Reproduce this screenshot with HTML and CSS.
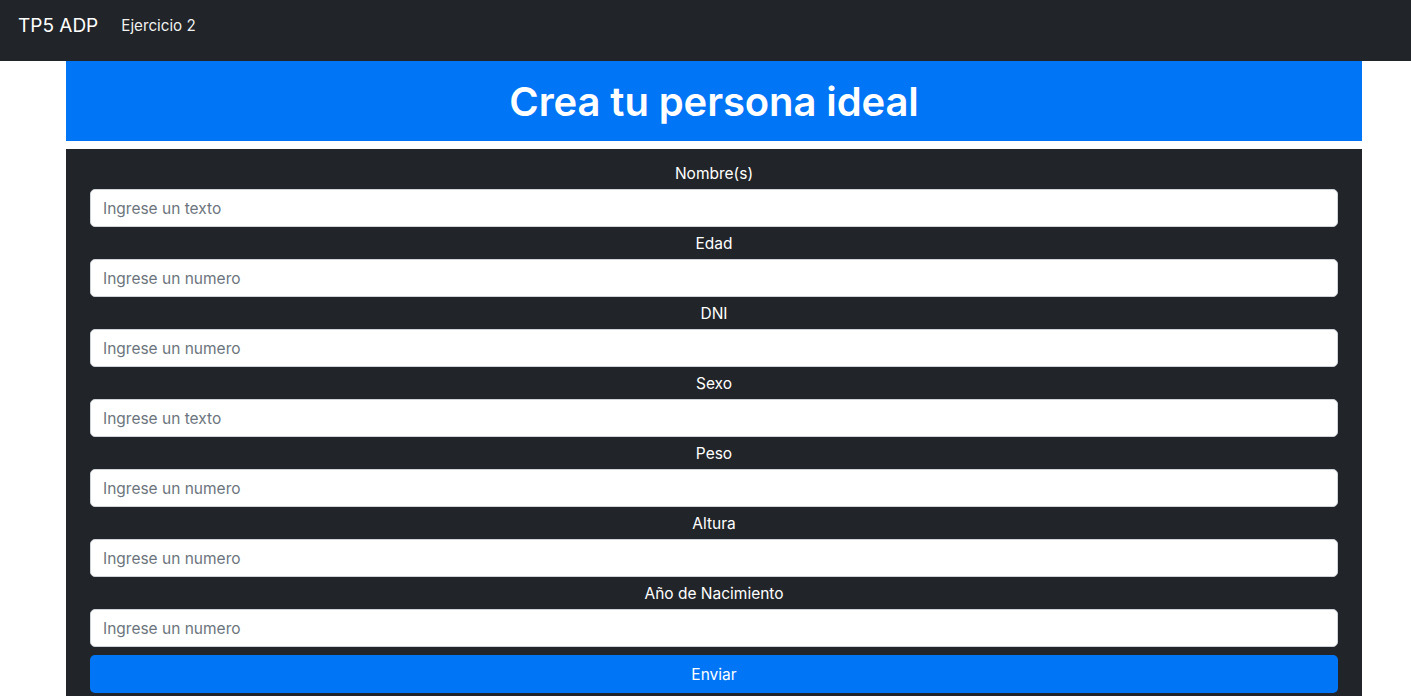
FILE: index.html
```html
<!DOCTYPE html>
<html lang="es">
<head>
<meta charset="utf-8">
<title>TP5 ADP</title>
<link rel="stylesheet" href="styles.css">
</head>
<body>
<nav class="navbar">
  <span class="brand">TP5 ADP</span>
  <span class="nav-link">Ejercicio 2</span>
</nav>
<main class="container">
  <header class="hero"><h1>Crea tu persona ideal</h1></header>
  <form class="form">
    <div class="group"><label>Nombre(s)</label><input type="text" placeholder="Ingrese un texto"></div>
    <div class="group"><label>Edad</label><input type="text" placeholder="Ingrese un numero"></div>
    <div class="group"><label>DNI</label><input type="text" placeholder="Ingrese un numero"></div>
    <div class="group"><label>Sexo</label><input type="text" placeholder="Ingrese un texto"></div>
    <div class="group"><label>Peso</label><input type="text" placeholder="Ingrese un numero"></div>
    <div class="group"><label>Altura</label><input type="text" placeholder="Ingrese un numero"></div>
    <div class="group"><label>Año de Nacimiento</label><input type="text" placeholder="Ingrese un numero"></div>
    <button type="button" class="btn">Enviar</button>
  </form>
</main>
</body>
</html>
```
FILE: styles.css
```css
* { box-sizing: border-box; }
html, body { margin: 0; padding: 0; }
body {
  font-family: Inter, "Liberation Sans", Arial, sans-serif;
  background: #fff;
  color: #fff;
  overflow: hidden;
  height: 696px;
}
.navbar {
  background: #212529;
  height: 61px;
  display: flex;
  align-items: flex-start;
  padding: 13px 0 0 18px;
}
.brand {
  font-size: 19px;
  line-height: 26px;
  margin-right: 23px;
}
.nav-link {
  font-size: 15.2px;
  line-height: 26px;
  color: rgba(255,255,255,0.95);
}
.container {
  width: 1296px;
  margin-left: 66px;
}
.hero {
  background: #0075f6;
  height: 80px;
  display: flex;
  align-items: center;
  justify-content: center;
  margin-bottom: 8px;
}
.hero h1 {
  margin: 0;
  font-size: 40px;
  font-weight: 600;
  letter-spacing: -0.1px;
}
.form {
  background: #212529;
  padding: 13px 24px 10px;
  display: flex;
  flex-direction: column;
}
.group {
  display: flex;
  flex-direction: column;
  margin-bottom: 5px;
}
.group label {
  text-align: center;
  font-size: 15.5px;
  line-height: 24px;
  font-weight: 400;
  margin-bottom: 3px;
}
.group input {
  height: 38px;
  border: 1px solid #ced4da;
  border-radius: 5px;
  padding: 0 12px;
  font-family: inherit;
  font-size: 15.5px;
  color: #212529;
  background: #fff;
}
.group input::placeholder { color: #6c757d; }
.btn {
  margin-top: 3px;
  height: 38px;
  border: none;
  border-radius: 5px;
  background: #0075f6;
  color: #fff;
  font-family: inherit;
  font-size: 15.5px;
}
```
